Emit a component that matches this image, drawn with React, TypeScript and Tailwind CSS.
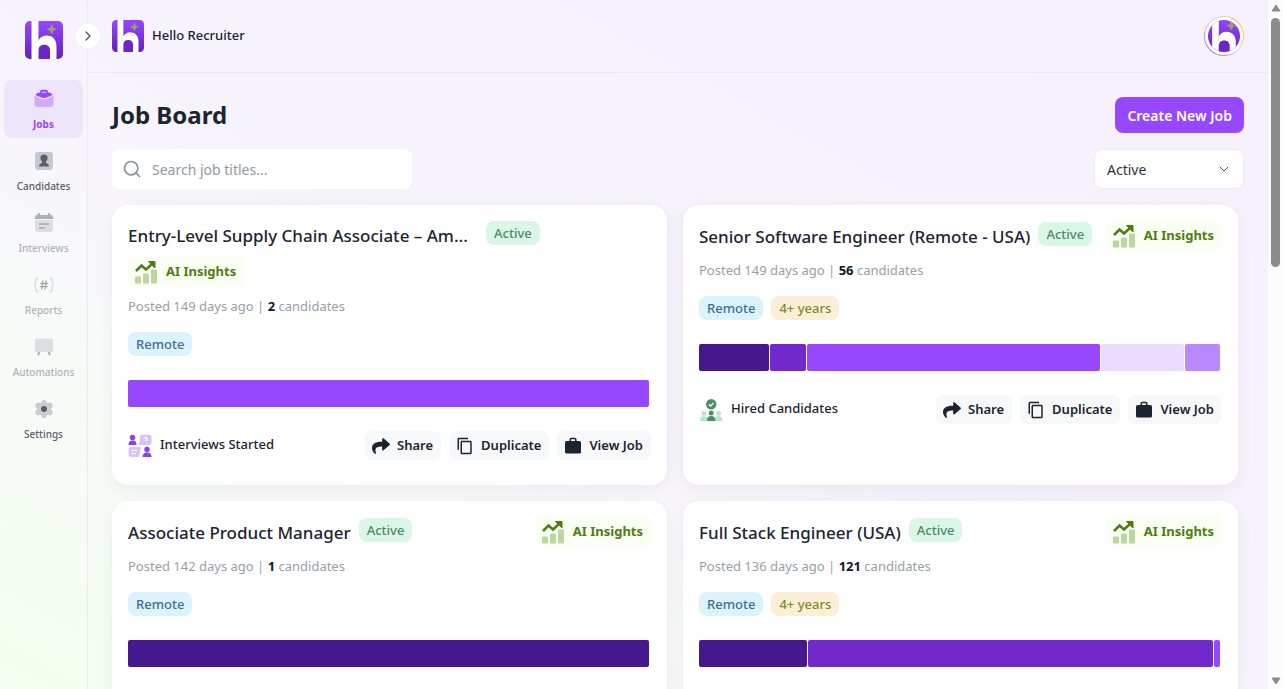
import { useId, useState, type ReactNode } from 'react';
import { ChevronDown, ChevronRight, Search } from 'lucide-react';
import { FaShare } from 'react-icons/fa';
import { MdContentCopy } from 'react-icons/md';

interface Segment {
  value: number;
  color: string;
}

interface Job {
  title: string;
  days: number;
  candidates: number;
  tags: string[];
  stage: 'interviews' | 'hired';
  segments: Segment[];
  stacked?: boolean;
}

const jobs: Job[] = [
  {
    title: 'Entry-Level Supply Chain Associate – Am...',
    days: 149,
    candidates: 2,
    tags: ['Remote'],
    stage: 'interviews',
    segments: [{ value: 2, color: 'bg-[#9747ff]' }],
    stacked: true,
  },
  {
    title: 'Senior Software Engineer (Remote - USA)',
    days: 149,
    candidates: 56,
    tags: ['Remote', '4+ years'],
    stage: 'hired',
    segments: [
      { value: 71, color: 'bg-[#46188e]' },
      { value: 36, color: 'bg-[#7128cc]' },
      { value: 295, color: 'bg-[#9747ff]' },
      { value: 84, color: 'bg-[#ebdcff]' },
      { value: 35, color: 'bg-[#b988ff]' },
    ],
  },
  {
    title: 'Associate Product Manager',
    days: 142,
    candidates: 1,
    tags: ['Remote'],
    stage: 'interviews',
    segments: [{ value: 1, color: 'bg-[#46188e]' }],
  },
  {
    title: 'Full Stack Engineer (USA)',
    days: 136,
    candidates: 121,
    tags: ['Remote', '4+ years'],
    stage: 'hired',
    segments: [
      { value: 108, color: 'bg-[#46188e]' },
      { value: 405, color: 'bg-[#7128cc]' },
      { value: 6, color: 'bg-[#9747ff]' },
    ],
  },
];

function Logo({ className }: { className?: string }) {
  const id = useId();
  return (
    <svg viewBox="0 0 38 38" className={className} aria-hidden="true">
      <defs>
        <linearGradient id={id} x1="0" y1="0" x2="0" y2="1">
          <stop offset="0" stopColor="#9747ff" />
          <stop offset="1" stopColor="#6420bd" />
        </linearGradient>
        <clipPath id={`${id}-clip`}>
          <rect width="38" height="38" rx="5" />
        </clipPath>
      </defs>
      <g clipPath={`url(#${id}-clip)`}>
        <rect width="38" height="38" fill={`url(#${id})`} />
        <rect x="6.5" width="7" height="38" fill="#fff" />
        <path d="M13 20c2-3.700 5-5.500 8.500-5.500 6.500 0 10 4.500 10 11.500v12H13z" fill="#fff" />
        <path d="M13.500 38v-8.500c0-3.500 2-5.700 5.700-5.700 3.800 0 5.800 2.200 5.800 5.700V38z" fill="#6c26c8" />
      </g>
      <path d="M26.700 3.800l1.200 3.300 3.300 1.200-3.300 1.200-1.200 3.300-1.200-3.300-3.300-1.200 3.300-1.200z" fill="#9aaa4e" stroke="#9aaa4e" strokeWidth=".8" />
    </svg>
  );
}

/* Sidebar icons */

const JobsIcon = () => (
  <svg viewBox="0 0 20 20" className="size-5">
    <path d="M.5 6.500c3 1 5.500 4 9.500 4s6.500-3 9.500-4V15a3 3 0 0 1-3 3h-13a3 3 0 0 1-3-3z" fill="#cfa9ff" />
    <path d="M1.500 5.500C3 4 4.500 3.500 6 3.500c0-2 1-2.700 2.500-2.700h3c1.500 0 2.500.7 2.500 2.700 1.500 0 3 .5 4.500 2C17 7 15 7.500 13 8.500h-1.500V9h-3v-.5H7c-2-1-4-1.500-5.500-3z" fill="#9747ff" />
    <path d="M7.800 3.300h4.400" stroke="#d9bcff" strokeWidth="1.200" />
  </svg>
);

const CandidatesIcon = () => (
  <svg viewBox="0 0 20 20" className="size-5">
    <rect x="1" y="1" width="18" height="18" rx="3" fill="#c5c9cc" />
    <circle cx="10" cy="7" r="3.600" fill="#596066" />
    <path d="M8 9h4v3c2 .3 3 1.500 3 3.500H5c0-2 1-3.200 3-3.500z" fill="#596066" />
  </svg>
);

const InterviewsIcon = () => (
  <svg viewBox="0 0 20 20" className="size-5">
    <path d="M1 7h18v9a3 3 0 0 1-3 3H4a3 3 0 0 1-3-3z" fill="#dcdfe1" />
    <path d="M1 6V4a2 2 0 0 1 2-2h14a2 2 0 0 1 2 2v2z" fill="#abb1b5" />
    <path d="M5 .8v3M15 .8v3" stroke="#abb1b5" strokeWidth="2" strokeLinecap="round" />
    <path d="M5.500 11h9M5.500 15h5" stroke="#a4abb0" strokeWidth="1.500" strokeLinecap="round" />
  </svg>
);

const ReportsIcon = () => (
  <svg viewBox="0 0 20 20" className="size-5" fill="none" strokeLinecap="round">
    <path d="M4 3C2 3 1.800 4 1.800 6s0 3.300-1.200 4c1.200.7 1.200 2 1.200 4s.2 3 2.200 3M16 3c2 0 2.200 1 2.200 3s0 3.300 1.200 4c-1.200.7-1.200 2-1.200 4s-.2 3-2.200 3" stroke="#dcdfe1" strokeWidth="1.600" />
    <path d="M9 6l-1.200 8M12.200 6L11 14M6.700 8.500h7M6.200 11.700h7" stroke="#a4abb0" strokeWidth="1.300" />
  </svg>
);

const AutomationsIcon = () => (
  <svg viewBox="0 0 20 20" className="size-5">
    <rect x="1" y="1.500" width="18" height="13.500" rx="1.500" fill="#dcdfe1" />
    <path d="M5.500 15L4 18M14.500 15l1.500 3" stroke="#abb1b5" strokeWidth="2" />
  </svg>
);

const SettingsIcon = () => (
  <svg viewBox="0 0 20 20" className="size-5">
    <g fill="#c9cdd0">
      <circle cx="10" cy="10" r="7" />
      <circle cx="10" cy="3.600" r="2.600" />
      <circle cx="10" cy="16.400" r="2.600" />
      <circle cx="4.300" cy="6.700" r="3" />
      <circle cx="15.700" cy="6.700" r="3" />
      <circle cx="4.300" cy="13.300" r="3" />
      <circle cx="15.700" cy="13.300" r="3" />
    </g>
    <circle cx="10" cy="10" r="3" fill="#596066" />
  </svg>
);

/* Card icons */

const InsightsIcon = () => (
  <svg viewBox="0 0 24 24" className="size-6">
    <g fill="#bcd5a2">
      <rect x="1" y="16.500" width="6" height="7" rx="1" />
      <rect x="9" y="13.500" width="6" height="10" rx="1" />
      <rect x="17" y="9.500" width="6" height="14" rx="1" />
    </g>
    <path d="M2 11l5.500-5.500 4.500 4L18 4" fill="none" stroke="#4f7d12" strokeWidth="2.500" />
    <path d="M14.500 1.500h6.500V8z" fill="#4f7d12" stroke="#4f7d12" strokeWidth="1" />
  </svg>
);

const InterviewStageIcon = () => (
  <svg viewBox="0 0 24 24" className="size-6 shrink-0">
    <g fill="#8a3ff0">
      <circle cx="4.500" cy="3.500" r="2.700" />
      <path d="M.5 11c0-3 1-4.500 4-4.500s4 1.500 4 4.500z" />
      <circle cx="19" cy="15.500" r="2.700" />
      <path d="M14.500 23c0-3 1.500-4.500 4.500-4.500s4.500 1.500 4.500 4.500z" />
    </g>
    <path d="M14 .8h7.500a2 2 0 0 1 2 2V9a2 2 0 0 1-2 2H11l1-8a2 2 0 0 1 2-2.200z" fill="#dcc2fb" />
    <path d="M2.500 13H13l-1.500 8a2 2 0 0 1-2 2h-7a2 2 0 0 1-2-2v-6a2 2 0 0 1 2-2z" fill="#dcc2fb" />
    <path d="M16 4.500c1-1.500 3.500-.8 3 .8-.3 1-1.500 1-1.500 2M3.500 16.500h6M3.500 19.500h4" stroke="#fff" strokeWidth="1.200" fill="none" />
  </svg>
);

const HiredStageIcon = () => (
  <svg viewBox="0 0 24 24" className="size-6 shrink-0">
    <g fill="#b5e6c9">
      <circle cx="5" cy="15.500" r="2.400" />
      <path d="M1 23c0-3 1-4.800 4-4.800S9 20 9 23z" />
      <circle cx="19.500" cy="15.500" r="2.400" />
      <path d="M15.500 23c0-3 1-4.800 4-4.800s4 1.800 4 4.800z" />
    </g>
    <g fill="#4b9068">
      <circle cx="12.200" cy="6.300" r="5.200" />
      <circle cx="12.200" cy="15" r="2.500" />
      <path d="M8 23c0-3.200 1.200-5 4.200-5s4.200 1.800 4.200 5z" />
    </g>
    <path d="M9.800 6.300l1.800 1.800 3-3.200" stroke="#fff" strokeWidth="1.300" fill="none" />
  </svg>
);

const BriefcaseIcon = () => (
  <svg viewBox="0 0 18 18" className="size-[18px]">
    <path d="M6.200 4V2.500a1 1 0 0 1 1-1h3.600a1 1 0 0 1 1 1V4" fill="none" stroke="#1c2430" strokeWidth="1.500" />
    <rect x="1" y="4" width="16" height="12.500" rx="1.500" fill="#1c2430" />
  </svg>
);

const navItems = [
  { label: 'Jobs', icon: <JobsIcon />, style: 'bg-[#ede5fb] font-bold text-[#9747ff]' },
  { label: 'Candidates', icon: <CandidatesIcon />, style: 'font-medium text-[#596066]' },
  { label: 'Interviews', icon: <InterviewsIcon />, style: 'font-medium text-[#adb4b9]' },
  { label: 'Reports', icon: <ReportsIcon />, style: 'font-medium text-[#adb4b9]' },
  { label: 'Automations', icon: <AutomationsIcon />, style: 'font-medium text-[#adb4b9]' },
  { label: 'Settings', icon: <SettingsIcon />, style: 'font-medium text-[#596066]' },
];

function Sidebar() {
  return (
    <aside className="relative w-[88px] shrink-0 border-r border-[#efebf3] px-1 pt-[21px]">
      <Logo className="mx-auto size-[38px]" />
      <nav className="mt-[21px] flex flex-col gap-1">
        {navItems.map((item) => (
          <a
            key={item.label}
            href="#"
            className={`flex h-[58px] flex-col items-center gap-[7px] rounded-lg pt-[9px] text-[10px] leading-4 ${item.style}`}
          >
            {item.icon}
            {item.label}
          </a>
        ))}
      </nav>
      <button
        aria-label="Expand sidebar"
        className="absolute top-6 -right-[13px] flex size-6 items-center justify-center rounded-full bg-white text-[#4b5563]"
      >
        <ChevronRight className="size-4" />
      </button>
    </aside>
  );
}

function ActionButton({ icon, label }: { icon: ReactNode; label: string }) {
  return (
    <button className="flex h-[29px] items-center gap-1.5 rounded-lg bg-[#f6f8fa] pr-2 pl-1.5 text-[13px] font-semibold whitespace-nowrap text-[#1c2430]">
      <span className="flex w-5 justify-center">{icon}</span>
      {label}
    </button>
  );
}

function JobCard({ job }: { job: Job }) {
  return (
    <article className="rounded-2xl bg-white px-4 pt-4 pb-[25px] shadow-[0_4px_16px_rgba(30,20,60,0.06)]">
      {/* Title row */}
      <div className="flex flex-wrap items-center justify-between gap-y-2">
        <div className={`flex h-7 items-start gap-2 ${job.stacked ? 'basis-full' : ''}`}>
          <h2
            className={`text-[17px] leading-[30px] font-medium whitespace-nowrap text-[#1c2430] ${
              job.stacked ? 'w-[350px]' : ''
            }`}
          >
            {job.title}
          </h2>
          <span className="h-6 rounded-lg bg-[#dbf5e6] px-2 text-[13px] leading-6 font-medium text-[#4a8c66]">
            Active
          </span>
        </div>
        <button className="flex h-[29px] items-center gap-2 rounded-lg bg-[#f9fff2] pr-2 pl-1.5 text-[13px] font-bold whitespace-nowrap text-[#4f7d12]">
          <InsightsIcon />
          AI Insights
        </button>
      </div>

      <p className="mt-2.5 text-[13px] leading-5 text-[#97a0a8]">
        Posted {job.days} days ago | <strong className="text-[#11161d]">{job.candidates}</strong> candidates
      </p>

      {/* Tags */}
      <div className="mt-4 flex gap-2">
        {job.tags.map((tag) => (
          <span
            key={tag}
            className={`h-6 rounded-lg px-2 text-[13px] leading-6 font-medium ${
              tag === 'Remote' ? 'bg-[#dbf3fb] text-[#466d94]' : 'bg-[#fbf0d7] text-[#7d8a2c]'
            }`}
          >
            {tag}
          </span>
        ))}
      </div>

      {/* Pipeline */}
      <div className="mt-6 mr-0.5 flex h-[27px] gap-px">
        {job.segments.map((segment) => (
          <div key={segment.color} className={`rounded-xs ${segment.color}`} style={{ flex: `${segment.value} 1 0` }} />
        ))}
      </div>

      <div className="mt-6 flex items-center justify-between">
        <div className="flex items-start gap-2">
          {job.stage === 'hired' ? <HiredStageIcon /> : <InterviewStageIcon />}
          <span className="text-[13px] leading-5 font-medium text-[#1c2430]">
            {job.stage === 'hired' ? 'Hired Candidates' : 'Interviews Started'}
          </span>
        </div>
        <div className="flex gap-2">
          <ActionButton icon={<FaShare className="size-[18px]" />} label="Share" />
          <ActionButton icon={<MdContentCopy className="size-[18px]" />} label="Duplicate" />
          <ActionButton icon={<BriefcaseIcon />} label="View Job" />
        </div>
      </div>
    </article>
  );
}

function Scrollbar() {
  return (
    <div className="flex w-[15px] shrink-0 flex-col items-center justify-between bg-[#fcfcfc] py-1" aria-hidden="true">
      <div className="flex flex-col items-center gap-1.5">
        <svg viewBox="0 0 10 8" className="h-2 w-2.5">
          <path d="M5 1l4 6H1z" fill="#8b8b8b" stroke="#8b8b8b" strokeLinejoin="round" />
        </svg>
        <div className="h-[249px] w-[9px] rounded-full bg-[#8b8b8b]" />
      </div>
      <svg viewBox="0 0 10 8" className="h-2 w-2.5">
        <path d="M5 7L1 1h8z" fill="#8b8b8b" stroke="#8b8b8b" strokeLinejoin="round" />
      </svg>
    </div>
  );
}

export default function App() {
  const [query, setQuery] = useState('');
  const [status, setStatus] = useState('Active');

  return (
    <div className="flex h-screen overflow-hidden bg-[linear-gradient(to_top_right,#f3fff0_0%,#f8f9f9_30%,#f7f3fc_50%,#f6f0fd_100%)] font-['Noto_Sans','Open_Sans',sans-serif]">
      <Sidebar />

      <div className="flex min-w-0 flex-1 flex-col">
        {/* Header */}
        <header className="flex h-[73px] shrink-0 items-center justify-between border-b border-[#ece7f2] px-6">
          <div className="flex items-center gap-2">
            <Logo className="size-8" />
            <span className="text-[13px] font-medium text-[#1c2430]">Hello Recruiter</span>
          </div>
          <button
            aria-label="Account"
            className="size-10 rounded-full bg-[linear-gradient(45deg,#9747ff,#dcd3e8,#d9c94a)] p-px"
          >
            <span className="flex size-full items-center justify-center overflow-hidden rounded-full border-3 border-white bg-white">
              <Logo className="size-9 shrink-0 rounded-full" />
            </span>
          </button>
        </header>

        <main className="min-h-0 flex-1 overflow-y-auto px-6 pt-6 [scrollbar-width:none]">
          <div className="flex h-9 items-center justify-between">
            <h1 className="text-2xl font-bold text-[#1c2430]">Job Board</h1>
            <button className="h-9 rounded-lg bg-[#9747ff] px-3 text-[14px] font-semibold text-white">
              Create New Job
            </button>
          </div>

          {/* Filters */}
          <div className="mt-4 flex justify-between">
            <label className="flex h-10 w-[300px] items-center gap-2.5 rounded-lg bg-white px-2.5">
              <Search className="size-5 text-[#8a949b]" />
              <input
                type="text"
                value={query}
                onChange={(e) => setQuery(e.target.value)}
                placeholder="Search job titles..."
                aria-label="Search job titles"
                className="min-w-0 flex-1 text-[14px] outline-none placeholder:text-[#8f999f]"
              />
            </label>
            <div className="relative">
              <select
                value={status}
                onChange={(e) => setStatus(e.target.value)}
                aria-label="Job status"
                className="h-10 w-[150px] appearance-none rounded-lg border border-[#efebf5] bg-white px-3 text-[14px] text-[#2c343c]"
              >
                <option>Active</option>
                <option>Draft</option>
                <option>Closed</option>
              </select>
              <ChevronDown className="pointer-events-none absolute top-3 right-3 size-4 text-[#4b5563]" strokeWidth={1.5} />
            </div>
          </div>

          {/* Job cards */}
          <div className="mt-4 mr-1.5 grid grid-cols-2 gap-4">
            {jobs.map((job) => (
              <JobCard key={job.title} job={job} />
            ))}
          </div>
        </main>
      </div>

      <Scrollbar />
    </div>
  );
}
